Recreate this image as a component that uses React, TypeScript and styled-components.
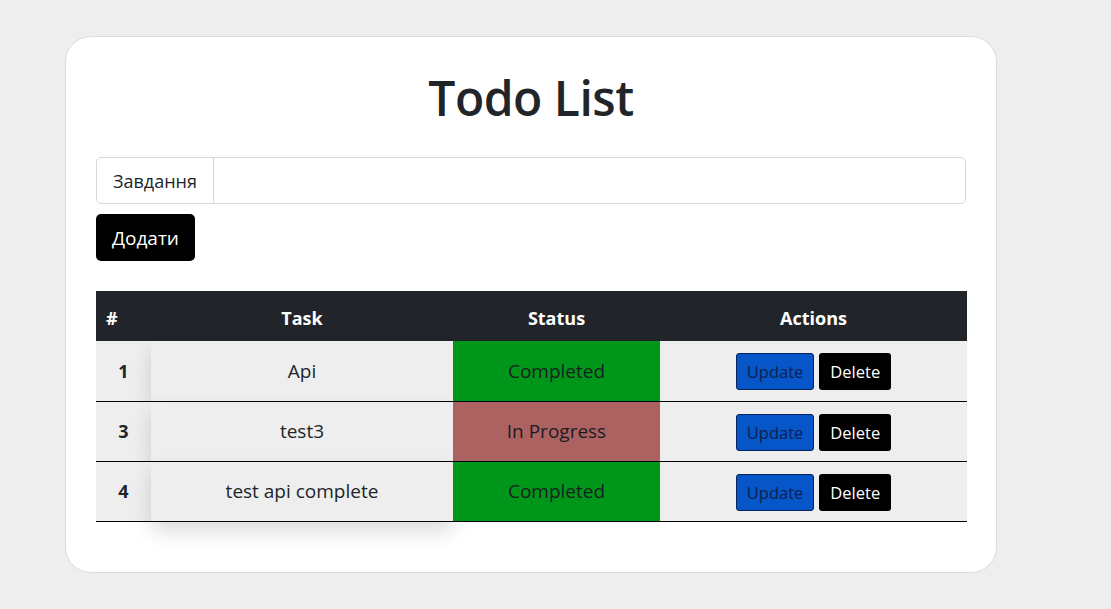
import React from "react";
import styled, { createGlobalStyle } from "styled-components";

const GlobalStyle = createGlobalStyle`
  html, body {
    margin: 0;
    padding: 0;
    background: #eeeeee;
    font-family: "Open Sans", "Noto Sans", sans-serif;
    color: #212529;
  }
  * { box-sizing: border-box; }
`;

const Page = styled.div`
  padding: 36px 0 0 65px;
  min-height: 609px;
`;

const Card = styled.div`
  width: 932px;
  background: #ffffff;
  border: 1px solid #dcdcdc;
  border-radius: 26px;
  padding: 30px 30px 50px 30px;
`;

const Title = styled.h1`
  margin: 0 0 32px 0;
  padding-top: 2px;
  text-align: center;
  font-size: 48px;
  font-weight: 600;
  line-height: 58px;
  letter-spacing: -0.5px;
  color: #212529;
`;

const InputGroup = styled.div`
  display: flex;
  height: 47px;
  margin-top: -2px;
  border: 1px solid #d6d9dc;
  border-radius: 5px;
  background: #fff;
`;

const InputLabel = styled.span`
  display: flex;
  align-items: center;
  padding: 0 16px;
  font-size: 18px;
  border-right: 1px solid #d6d9dc;
`;

const TextInput = styled.input`
  flex: 1;
  border: none;
  outline: none;
  background: transparent;
  font-family: inherit;
  font-size: 18px;
  border-radius: 0 5px 5px 0;
`;

const AddButton = styled.button`
  display: block;
  margin: 10px 0 30px 0;
  height: 47px;
  padding: 0 16px;
  background: #000;
  color: #fff;
  border: none;
  border-radius: 5px;
  font-family: inherit;
  font-size: 19px;
  font-weight: 500;
`;

const Table = styled.table`
  width: 871px;
  border-collapse: collapse;
  table-layout: fixed;
`;

const HeadCell = styled.th<{ $left?: boolean }>`
  background: #212529;
  color: #fff;
  height: 50px;
  font-size: 18px;
  font-weight: 700;
  text-align: ${(p) => (p.$left ? "left" : "center")};
  padding: 3px 0 0 ${(p) => (p.$left ? "10px" : "0")};
`;

const Row = styled.tr`
  border-bottom: 1px solid #000;
`;

const Cell = styled.td`
  height: 60px;
  background: #eeeeee;
  text-align: center;
  font-size: 19px;
  padding: 0;
`;

const NumCell = styled(Cell)`
  font-size: 18px;
  font-weight: 700;
`;

const TaskCell = styled(Cell)`
  box-shadow: 0 10px 20px rgba(0, 0, 0, 0.14);
`;

const StatusCell = styled(Cell)<{ $done: boolean }>`
  background: ${(p) => (p.$done ? "#00961a" : "#ad6262")};
  color: #1a1d20;
`;

const Actions = styled.div`
  display: flex;
  justify-content: center;
  gap: 5px;
  padding-top: 2px;
`;

const UpdateButton = styled.button`
  height: 37px;
  padding: 0 10px;
  background: #0655c9;
  color: #0c2150;
  border: 1px solid #07235c;
  border-radius: 3px;
  font-family: inherit;
  font-size: 16.5px;
`;

const DeleteButton = styled.button`
  height: 37px;
  padding: 0 11px;
  background: #000;
  color: #fff;
  border: none;
  border-radius: 3px;
  font-family: inherit;
  font-size: 16.5px;
`;

const todos = [
  { id: 1, task: "Api", done: true },
  { id: 3, task: "test3", done: false },
  { id: 4, task: "test api complete", done: true },
];

export default function App() {
  return (
    <>
      <GlobalStyle />
      <Page>
        <Card>
          <Title>Todo List</Title>
          <InputGroup>
            <InputLabel>Завдання</InputLabel>
            <TextInput type="text" />
          </InputGroup>
          <AddButton>Додати</AddButton>
          <Table>
            <colgroup>
              <col style={{ width: 55 }} />
              <col style={{ width: 302 }} />
              <col style={{ width: 207 }} />
              <col style={{ width: 307 }} />
            </colgroup>
            <thead>
              <tr>
                <HeadCell $left>#</HeadCell>
                <HeadCell>Task</HeadCell>
                <HeadCell>Status</HeadCell>
                <HeadCell>Actions</HeadCell>
              </tr>
            </thead>
            <tbody>
              {todos.map((t) => (
                <Row key={t.id}>
                  <NumCell>{t.id}</NumCell>
                  <TaskCell>{t.task}</TaskCell>
                  <StatusCell $done={t.done}>
                    {t.done ? "Completed" : "In Progress"}
                  </StatusCell>
                  <Cell>
                    <Actions>
                      <UpdateButton>Update</UpdateButton>
                      <DeleteButton>Delete</DeleteButton>
                    </Actions>
                  </Cell>
                </Row>
              ))}
            </tbody>
          </Table>
        </Card>
      </Page>
    </>
  );
}
